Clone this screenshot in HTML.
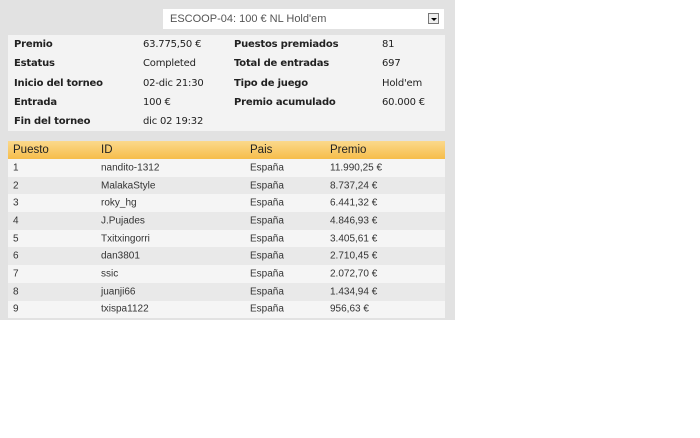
<!DOCTYPE html><html><head><style>
body{margin:0;background:#fff;width:700px;height:438px;position:relative;font-family:"DejaVu Sans",Verdana,sans-serif;}
.panel{position:absolute;left:0;top:0;width:455px;height:320px;background:#e2e2e2;}
.sel{position:absolute;left:163px;top:9px;width:281px;height:20px;background:#fff;font-family:"Liberation Sans",sans-serif;font-size:11px;color:#555;line-height:20px;}
.sel span{position:absolute;left:7px;}
.btn{position:absolute;left:265px;top:4px;width:11px;height:11px;border:1px solid #777;background:#eee;box-sizing:border-box;}
.btn:after{content:"";position:absolute;left:2px;top:4px;border-left:3px solid transparent;border-right:3px solid transparent;border-top:3px solid #000;}
.info{position:absolute;left:8px;top:35px;width:437px;height:96px;background:#f3f3f3;font-size:10px;color:#222;letter-spacing:-0.2px;}
.info div{position:absolute;white-space:nowrap;}
.b{font-weight:bold;}
.tbl{position:absolute;left:8px;top:141px;width:437px;}
.hd{height:18px;background:linear-gradient(#fbd98c,#f6bd4b);font-family:"Liberation Sans",sans-serif;font-size:11.5px;color:#222;position:relative;}
.r{height:17.7px;position:relative;font-family:"Liberation Sans",sans-serif;font-size:10px;color:#333;}
.r:nth-child(even){background:#e9e9e9}.r:nth-child(odd){background:#f5f5f5}
.hd span,.r span{position:absolute;top:50%;transform:translateY(-50%);}
.c1{left:5px}.c2{left:93px}.c3{left:242px}.c4{left:322px}
</style></head><body>
<div class="panel">
<div class="sel"><span>ESCOOP-04: 100 € NL Hold'em</span><div class="btn"></div></div>
<div class="info">
<div class="b" style="left:6px;top:4px">Premio</div><div style="left:135px;top:4px">63.775,50 €</div>
<div class="b" style="left:226px;top:4px">Puestos premiados</div><div style="left:374px;top:4px">81</div>
<div class="b" style="left:6px;top:23px">Estatus</div><div style="left:135px;top:23px">Completed</div>
<div class="b" style="left:226px;top:23px">Total de entradas</div><div style="left:374px;top:23px">697</div>
<div class="b" style="left:6px;top:43px">Inicio del torneo</div><div style="left:135px;top:43px">02-dic 21:30</div>
<div class="b" style="left:226px;top:43px">Tipo de juego</div><div style="left:374px;top:43px">Hold'em</div>
<div class="b" style="left:6px;top:62px">Entrada</div><div style="left:135px;top:62px">100 €</div>
<div class="b" style="left:226px;top:62px">Premio acumulado</div><div style="left:374px;top:62px">60.000 €</div>
<div class="b" style="left:6px;top:81px">Fin del torneo</div><div style="left:135px;top:81px">dic 02 19:32</div>
</div>
<div class="tbl">
<div class="hd"><span class="c1">Puesto</span><span class="c2">ID</span><span class="c3">Pais</span><span class="c4">Premio</span></div>
<div>
<div class="r"><span class="c1">1</span><span class="c2">nandito-1312</span><span class="c3">España</span><span class="c4">11.990,25 €</span></div>
<div class="r"><span class="c1">2</span><span class="c2">MalakaStyle</span><span class="c3">España</span><span class="c4">8.737,24 €</span></div>
<div class="r"><span class="c1">3</span><span class="c2">roky_hg</span><span class="c3">España</span><span class="c4">6.441,32 €</span></div>
<div class="r"><span class="c1">4</span><span class="c2">J.Pujades</span><span class="c3">España</span><span class="c4">4.846,93 €</span></div>
<div class="r"><span class="c1">5</span><span class="c2">Txitxingorri</span><span class="c3">España</span><span class="c4">3.405,61 €</span></div>
<div class="r"><span class="c1">6</span><span class="c2">dan3801</span><span class="c3">España</span><span class="c4">2.710,45 €</span></div>
<div class="r"><span class="c1">7</span><span class="c2">ssic</span><span class="c3">España</span><span class="c4">2.072,70 €</span></div>
<div class="r"><span class="c1">8</span><span class="c2">juanji66</span><span class="c3">España</span><span class="c4">1.434,94 €</span></div>
<div class="r"><span class="c1">9</span><span class="c2">txispa1122</span><span class="c3">España</span><span class="c4">956,63 €</span></div>
</div></div>
</div>
</body></html>
